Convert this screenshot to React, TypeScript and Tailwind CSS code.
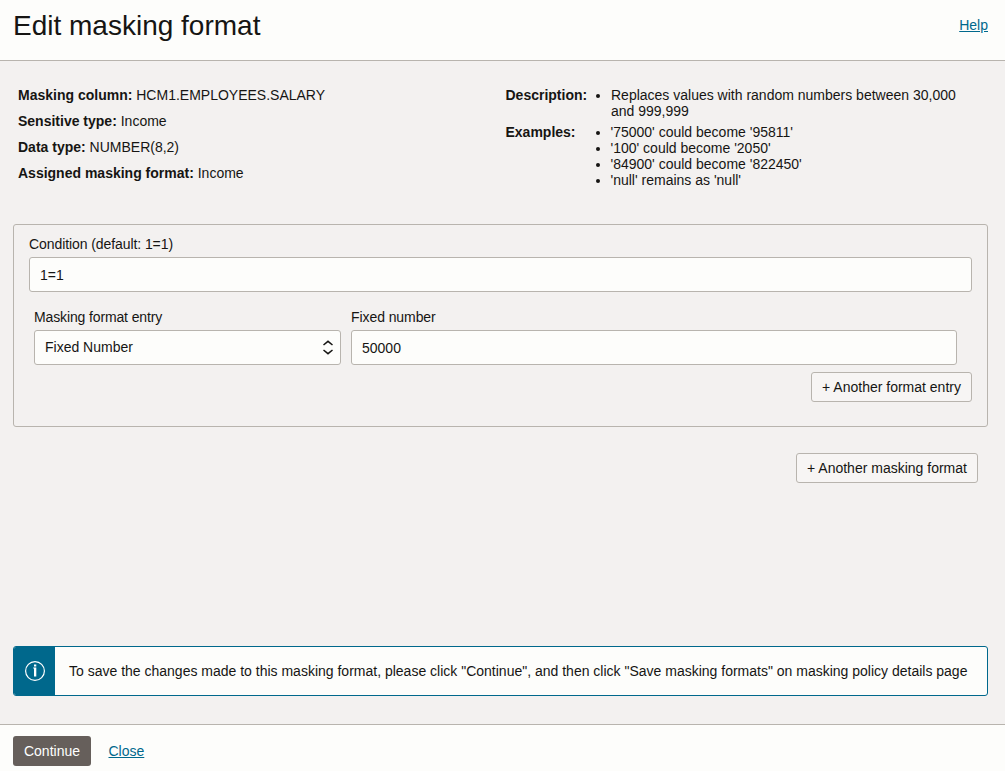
import type { ReactNode } from "react";

function Field({ label, children }: { label: string; children: ReactNode }) {
  return (
    <div className="h-[26px]">
      <span className="font-bold">{label}</span> {children}
    </div>
  );
}

const examples = [
  "'75000' could become '95811'",
  "'100' could become '2050'",
  "'84900' could become '822450'",
  "'null' remains as 'null'",
];

export default function App() {
  return (
    <div className="flex h-[771px] w-[1005px] flex-col overflow-hidden bg-[#f3f1f0] font-['Liberation_Sans',Arial,sans-serif] text-[14px] leading-4 text-[#161513]">
      <header className="flex h-[61px] shrink-0 items-start justify-between border-b border-[#b8b4ae] bg-[#fdfdfb] pr-[17px] pl-[13px]">
        <h1 className="mt-[10px] text-[28px] leading-8">Edit masking format</h1>
        <a className="mt-[17px] text-[#00688c] underline">Help</a>
      </header>

      <main className="flex flex-1 flex-col pr-[17px] pl-[13px]">
        <section className="flex h-[163px] pt-[26px] pl-[5px]">
          <div className="w-[487.5px] shrink-0">
            <Field label="Masking column:">HCM1.EMPLOYEES.SALARY</Field>
            <Field label="Sensitive type:">Income</Field>
            <Field label="Data type:">NUMBER(8,2)</Field>
            <Field label="Assigned masking format:">Income</Field>
          </div>
          <div>
            <div className="flex h-[37px]">
              <span className="w-[105.5px] shrink-0 font-bold">Description:</span>
              <ul className="w-[370px] list-disc">
                <li>Replaces values with random numbers between 30,000<br />and 999,999</li>
              </ul>
            </div>
            <div className="flex">
              <span className="w-[105px] shrink-0 font-bold">Examples:</span>
              <ul className="list-disc">
                {examples.map((e) => <li key={e}>{e}</li>)}
              </ul>
            </div>
          </div>
        </section>

        <section className="h-[203px] rounded-[3px] border border-[#b8b4ae] px-[15px] pt-[11px]">
          <label className="block tracking-[-0.08px]">Condition (default: 1=1)</label>
          <div className="mt-[5px] flex h-[35px] items-center rounded-[3px] border border-[#b8b4ae] bg-[#fdfdfb] px-[10px]">1=1</div>
          <div className="mt-[17px] flex gap-[10px] pr-[15px] pl-[5px]">
            <div className="w-[307px] shrink-0">
              <label className="block tracking-[-0.13px]">Masking format entry</label>
              <div className="mt-[5px] flex h-[35px] items-center justify-between rounded-[3px] border border-[#b8b4ae] bg-[#fdfdfb] pr-[7px] pl-[10px]">
                <span className="mb-[2px]">Fixed Number</span>
                <svg width="10" height="15" viewBox="0 0 10 15" fill="none" stroke="#161513" strokeWidth="1.5"><path d="M.5 5 5 1.300 9.500 5M.5 10 5 13.700 9.500 10" /></svg>
              </div>
            </div>
            <div className="flex-1">
              <label className="block tracking-[-0.08px]">Fixed number</label>
              <div className="mt-[5px] flex h-[35px] items-center rounded-[3px] border border-[#b8b4ae] bg-[#fdfdfb] px-[10px]">50000</div>
            </div>
          </div>
          <div className="mt-[7px] flex justify-end">
            <button className="h-[30px] w-[161px] rounded-[3px] border border-[#b8b4ae] bg-[#f7f5f4] whitespace-nowrap">+ Another format entry</button>
          </div>
        </section>

        <div className="mt-[26px] flex justify-end pr-[10px]">
          <button className="h-[30px] w-[182px] rounded-[3px] border border-[#b8b4ae] bg-[#f7f5f4] whitespace-nowrap">+ Another masking format</button>
        </div>

        <div className="mt-auto mb-[28px] flex h-[50px] overflow-hidden rounded-[3px] border border-[#00688c] bg-[#fdfdfb]">
          <div className="flex w-[41px] shrink-0 items-center justify-center bg-[#00688c]">
            <svg className="ml-[1px]" width="20" height="20" viewBox="0 0 20 20" fill="none" stroke="#fff"><circle cx="10" cy="10" r="9.400" strokeWidth="1.200" /><path d="M9 3.500h2.300v2H9zM8.200 6.500h3.100v9H9V7.500h-.8z" fill="#fff" stroke="none" /></svg>
          </div>
          <p className="flex items-center pl-[14px] whitespace-nowrap">To save the changes made to this masking format, please click "Continue", and then click "Save masking formats" on masking policy details page</p>
        </div>
      </main>

      <footer className="flex h-[47px] shrink-0 items-start border-t border-[#b8b4ae] bg-[#fdfdfb] pt-[11px] pl-[13px]">
        <button className="h-[30px] w-[78px] rounded-[3px] bg-[#665f5b] text-white">Continue</button>
        <a className="mt-[7px] ml-[17.5px] text-[#00688c] underline">Close</a>
      </footer>
    </div>
  );
}
